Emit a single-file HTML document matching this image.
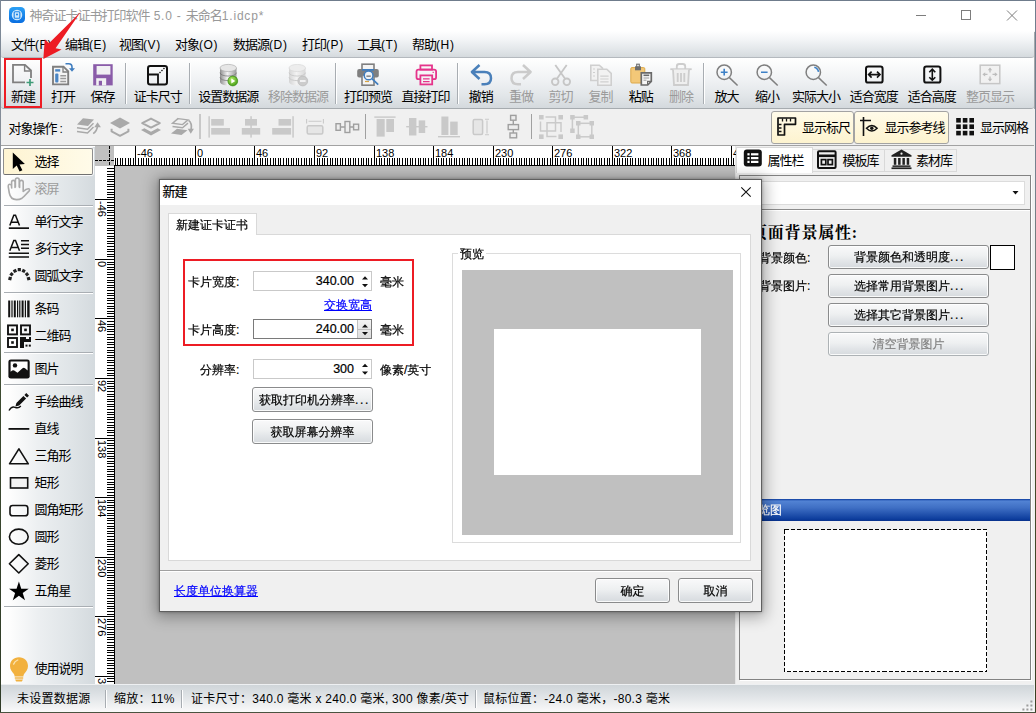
<!DOCTYPE html>
<html lang="zh-CN">
<head>
<meta charset="utf-8">
<title>神奇证卡证书打印软件 5.0</title>
<style>
*{box-sizing:border-box;margin:0;padding:0}
html,body{width:1036px;height:713px;overflow:hidden;background:#f0f0f0}
body{position:relative;font-family:"Liberation Sans","Noto Sans CJK SC",sans-serif;font-size:12px;color:#000}
.abs,.abs *{position:absolute}
svg{overflow:visible}
.ui{font-family:"Liberation Sans","Noto Sans CJK SC",sans-serif;font-size:12px;line-height:16px;white-space:nowrap}
.sim{font-family:"Liberation Sans","WenQuanYi Zen Hei","Noto Sans CJK SC",sans-serif;font-size:12px;line-height:14px;white-space:nowrap;-webkit-text-stroke:.2px currentColor}
/* desktop edges */
#edgeL{left:0;top:0;width:1px;height:713px;background:linear-gradient(#7a8796 0,#8a9099 25%,#858a84 44%,#3f4d33 52%,#2f3b27 100%)}
#edgeR{left:1035px;top:0;width:1px;height:713px;background:linear-gradient(#6f7d8e 0,#76828f 25%,#70766a 44%,#4a4f2c 52%,#3a3f22 100%)}
#edgeR2{left:1034px;top:32px;width:1px;height:77px;background:#a4a8ac}
#edgeB{left:0;top:712px;width:1036px;height:1px;background:#4a5340}
/* title */
#title{left:1px;top:0;width:1035px;height:31px;background:#fff;border-top:1px solid #6f7c8c}
#title .t{left:28.500px;top:6.500px;color:#999}
#title .lt{letter-spacing:.8px;white-space:pre}
/* menu */
#menu{left:1px;top:31px;width:1033px;height:27px;background:linear-gradient(#ffffff 0%,#f2f4f6 35%,#e3e7ea 70%,#d5dade 100%);border-bottom:1px solid #b4b9be;border-radius:0 0 3px 3px}
#menu span{top:5.500px;font-size:13px;letter-spacing:-1px}
/* toolbar */
#tb{left:1px;top:58px;width:1033px;height:51px;background:linear-gradient(#ffffff 0%,#f1f3f5 40%,#e2e6e9 75%,#d4d9dd 100%);border-bottom:1px solid #a6abaf;border-radius:0 0 3px 3px}
.tbi{font-size:13px;letter-spacing:-1px;top:30.500px;transform:translateX(-50%);text-align:center}
.dis{color:#9b9b9b}
.vsep{width:1px;background:#a8adb2;box-shadow:1px 0 0 #fff}
/* obj toolbar */
#ob{left:1px;top:109px;width:1033px;height:37px;background:#f0f0f0;border-bottom:1px solid #a2a2a2}
.tg{height:33px;top:2px;border:1px solid #a3a3a3;border-radius:3px;background:linear-gradient(#fffbe9,#fdf3cf)}
/* left panel */
#lp{left:1px;top:146px;width:94px;height:538px;background:linear-gradient(90deg,#fff 0%,#fdfdfd 10%,#eceff1 40%,#dfe4e7 75%,#d4dade 100%);border-top:1px solid #fff}
.lpi{left:33.500px;font-size:13px;letter-spacing:-1px;margin-top:-1.500px}
.hsep{left:3px;width:89px;height:1px;background:#a9aeb3;box-shadow:0 1px 0 #fff}
/* canvas */
#cv{left:95px;top:146px;width:641px;height:538px;background:#c0c0c0;overflow:hidden}
.rl,.rv{font-family:"Liberation Sans",sans-serif;font-size:11px;line-height:12px;white-space:nowrap}
.rv{transform-origin:0 0;transform:rotate(90deg)}
/* right panel */
#rp{left:736px;top:146px;width:298px;height:538px;background:#f0f0f0}
.btn{border:1px solid #8a8b8c;border-radius:3px;background:linear-gradient(#f9f9fa 0%,#eef0f1 45%,#e2e5e8 70%,#d6dade 100%);text-align:center;box-shadow:inset 0 0 0 1px rgba(255,255,255,.85)}
.btn span{left:0;right:0;text-align:center}
/* status */
#st{left:1px;top:684px;width:1033px;height:28px;background:linear-gradient(#cfd5d9 0%,#dfe3e6 40%,#f1f2f3 80%,#fafafa 100%);border-top:1px solid #eef0f2}
#st span{top:6px;letter-spacing:.27px}
#st i{top:5px;width:1px;height:18px;background:#a8adb2;box-shadow:1px 0 0 #fff}
/* dialog */
#dlg{left:159px;top:179px;width:603px;height:433px;background:#f0f0f0;border:1px solid #5f5f5f;box-shadow:0 2px 14px 3px rgba(0,0,0,.32),0 0 3px rgba(0,0,0,.3)}
.sp{background:#fff;border:1px solid #c9c9c9}
.num{font-family:"Liberation Sans",sans-serif;font-size:12.5px;line-height:14px}
.cj{font-size:13px;letter-spacing:-1px}
.lt{position:static!important;font-weight:normal;font-size:12px;letter-spacing:0}
#menu .lt{letter-spacing:.6px}
.dt{position:static!important;font-weight:normal;letter-spacing:1.700px}
.lnk{color:#0000ff;text-decoration:underline}
</style>
</head>
<body>
<div id="title" class="abs ui">
<svg style="left:8px;top:6px" width="16" height="16" viewBox="0 0 17 17"><defs><linearGradient id="lg0" x1="0" y1="0" x2="0" y2="1"><stop offset="0" stop-color="#2aa0f5"/><stop offset="1" stop-color="#0a6ee0"/></linearGradient></defs><rect x="0" y="0" width="17" height="17" rx="4.5" fill="url(#lg0)"/><circle cx="8.5" cy="8.5" r="5.6" fill="#cfe8fb"/><rect x="5.5" y="5" width="6" height="7" rx="1" fill="none" stroke="#1a84ea" stroke-width="1.2"/><circle cx="8.5" cy="8" r="1.1" fill="#1a84ea"/></svg>
<span class="t cj">神奇证卡证书打印软件<b class="lt"> 5.0 - </b>未命名<b class="lt">1.idcp*</b></span>
<svg style="left:915px;top:9px" width="104" height="12" viewBox="0 0 104 12" fill="none" stroke="#7d7d7d" stroke-width="1"><path d="M0 5.5h10"/><rect x="45.5" y="0.5" width="9" height="9"/><path d="M91 0.5l10 10M101 0.5l-10 10"/></svg>
</div>
<div id="menu" class="abs ui">
<span style="left:10px">文件<b class="lt">(F)</b></span><span style="left:64px">编辑<b class="lt">(E)</b></span><span style="left:118px">视图<b class="lt">(V)</b></span><span style="left:174px">对象<b class="lt">(O)</b></span><span style="left:232px">数据源<b class="lt">(D)</b></span><span style="left:301px">打印<b class="lt">(P)</b></span><span style="left:356px">工具<b class="lt">(T)</b></span><span style="left:411px">帮助<b class="lt">(H)</b></span>
</div>
<div id="tb" class="abs ui">
<svg style="left:0;top:0" width="1033" height="51" viewBox="1 58 1033 51">
<defs>
<linearGradient id="db" x1="0" y1="0" x2="1" y2="0"><stop offset="0" stop-color="#8e8e8e"/><stop offset=".45" stop-color="#f2f2f2"/><stop offset="1" stop-color="#9a9a9a"/></linearGradient>
<linearGradient id="dbd" x1="0" y1="0" x2="1" y2="0"><stop offset="0" stop-color="#d2d2d2"/><stop offset=".45" stop-color="#f3f3f3"/><stop offset="1" stop-color="#d6d6d6"/></linearGradient>
<radialGradient id="gr" cx=".4" cy=".35" r=".7"><stop offset="0" stop-color="#b6ec6a"/><stop offset="1" stop-color="#3f9a12"/></radialGradient>
</defs>
<!-- new -->
<path d="M31 78V70.5L25 64.8H13V82.3H25" fill="none" stroke="#7f7f7f" stroke-width="1.8"/><path d="M24.6 65v6h6" fill="none" stroke="#7f7f7f" stroke-width="1.4"/>
<path d="M30 79v7M26.5 82.5h7" stroke="#3f9b78" stroke-width="1.7" fill="none"/>
<!-- open -->
<path d="M53 66.7h10.5l4.7 4.7v13H53z" fill="#f4f4f4" stroke="#7f7f7f" stroke-width="1.9"/><path d="M63 67v5h5" fill="none" stroke="#7f7f7f" stroke-width="1.3"/>
<rect x="55.2" y="69.2" width="5" height="2.4" fill="#4a86c5"/><rect x="55.2" y="73.6" width="3.2" height="8.8" rx="1" fill="#4a86c5"/>
<path d="M60.3 75.7h5.8M60.3 78.6h5.8M60.3 81.5h5.8" stroke="#9a9a9a" stroke-width="1.5"/>
<path d="M65.5 63.8h3.2q3.3 0 3.3 3.4v2.5" fill="none" stroke="#3f7dbf" stroke-width="1.6"/><path d="M69 68.2h6l-3 3.6z" fill="#3f7dbf"/>
<!-- save -->
<rect x="93.2" y="64.2" width="19.5" height="21.2" fill="#8a5ca9"/><rect x="96.6" y="66" width="13.8" height="8.6" fill="#f1f1f3"/><rect x="96.2" y="78.2" width="10" height="7.2" fill="#f1f1f3"/><rect x="98.8" y="80.8" width="3.2" height="4.6" fill="#8a5ca9"/>
<!-- card size -->
<rect x="148" y="66" width="19" height="18.5" rx="2.2" fill="none" stroke="#111" stroke-width="2"/><path d="M148 74.5h10v10" fill="none" stroke="#111" stroke-width="1.8"/><path d="M159.5 73l5-5" stroke="#111" stroke-width="1.3" stroke-dasharray="1.4 1.4"/>
<!-- set datasource -->
<g><path d="M220 68v13.5c0 5.4 16.5 5.4 16.5 0V68z" fill="url(#db)"/><path d="M220 72.6c0 4.6 16.500 4.600 16.500 0M220 77.200c0 4.600 16.500 4.600 16.500 0" fill="none" stroke="#6f6f6f" stroke-width=".9" opacity=".75"/><ellipse cx="228.250" cy="68" rx="8.250" ry="3.600" fill="#e6e6e6" stroke="#a5a5a5" stroke-width=".6"/>
<circle cx="232.800" cy="81" r="4.900" fill="url(#gr)" stroke="#3a8d12" stroke-width=".7"/><path d="M231.300 78.500v5l4-2.500z" fill="#fff"/></g>
<!-- remove datasource -->
<g opacity=".9"><path d="M289 68v13.500c0 5.400 16.500 5.400 16.500 0V68z" fill="url(#dbd)"/><path d="M289 72.600c0 4.600 16.500 4.600 16.500 0M289 77.200c0 4.600 16.500 4.600 16.500 0" fill="none" stroke="#c4c4c4" stroke-width=".9"/><ellipse cx="297.250" cy="68" rx="8.250" ry="3.600" fill="#ececec" stroke="#d2d2d2" stroke-width=".6"/>
<circle cx="302.800" cy="81" r="4.900" fill="#c9c9c9" stroke="#b5b5b5" stroke-width=".7"/><rect x="300" y="80" width="5.600" height="2" fill="#f2f2f2"/></g>
<!-- print preview -->
<g><rect x="362" y="64.200" width="12" height="6" fill="#f4f4f4" stroke="#7f7f7f" stroke-width="1.600"/><rect x="357.200" y="69" width="21.600" height="8.600" rx="2" fill="#7f7f7f"/><rect x="362" y="69" width="12" height="1.700" fill="#3f7dbf"/><rect x="362" y="75" width="12" height="10.200" fill="#f4f4f4" stroke="#7f7f7f" stroke-width="1.600"/>
<circle cx="368.600" cy="75.400" r="4.400" fill="#eef3f8" stroke="#3f7dbf" stroke-width="1.500"/><path d="M366.400 76.200h4.400" stroke="#8a8a8a" stroke-width="1.600"/><path d="M371.900 78.700l6.300 6" stroke="#3f7dbf" stroke-width="1.700"/><path d="M365 81.500h4" stroke="#d9a441" stroke-width="1.200"/></g>
<!-- print -->
<g fill="none" stroke="#e5348b" stroke-width="1.800"><rect x="420.400" y="65.400" width="11.600" height="4.200"/><rect x="416.500" y="69.600" width="19.600" height="9.600" rx="2"/><rect x="420.400" y="75.400" width="11.800" height="9" fill="#f3f3f5"/><path d="M423 78.800h6.600M423 81.600h6.600" stroke-width="1.300"/><path d="M432.600 72.300h1.200" stroke-width="1.200"/></g>
<!-- undo -->
<path d="M479.500 65l-7.600 7 7.600 7M472.200 72h12.300q6.500 0 6.500 6.200 0 6-6.500 6h-3" fill="none" stroke="#4a80ba" stroke-width="2.500" stroke-linejoin="round"/>
<!-- redo -->
<path d="M523 65l7.600 7-7.600 7M530.300 72H518q-6.500 0-6.500 6.200 0 6 6.500 6h3" fill="none" stroke="#cbcbcb" stroke-width="2.500" stroke-linejoin="round"/>
<!-- cut -->
<g fill="none" stroke="#c6c6c6" stroke-width="1.800"><path d="M555.300 65l9.800 13.800M566.700 65l-9.800 13.800"/><circle cx="555.200" cy="81.800" r="3.300"/><circle cx="566.800" cy="81.800" r="3.300"/></g>
<!-- copy -->
<g fill="#f2f2f2" stroke="#cfcfcf" stroke-width="1.600"><path d="M590.800 65.200h8.500l3.200 3v12.300h-11.700z"/><path d="M597.800 69.200h9l4.400 4.200v11.800h-13.400z"/><path d="M600.300 76.200h8.300M600.300 79h8.300M600.300 81.800h8.300M593 69h2M593 72.500h2M593 76h2" stroke-width="1.200"/></g>
<!-- paste -->
<g><rect x="630.800" y="67.600" width="14" height="15.400" rx="1.200" fill="#f3c878" stroke="#dca94a" stroke-width="1"/><rect x="635" y="66.300" width="6" height="4" fill="#6d6d6d"/><rect x="636.700" y="64.200" width="2.600" height="3" fill="none" stroke="#6d6d6d" stroke-width="1.100"/>
<path d="M641.300 72.800h10v8.600l-3.600 3.600h-6.400z" fill="#f7f7f7" stroke="#6a6a6a" stroke-width="1.700"/><path d="M643.500 75.300h5.700" stroke="#6a6a6a" stroke-width="1.600"/><path d="M643.500 78h5.700M643.500 80.200h3" stroke="#9a9a9a" stroke-width="1"/><path d="M651 81.400h-3.400v3.400" fill="none" stroke="#6a6a6a" stroke-width="1.200"/></g>
<!-- delete -->
<g fill="none" stroke="#cdcdcd" stroke-width="1.800"><path d="M670.300 69.200h21.400"/><path d="M676.800 69v-2.600q0-2.400 2.400-2.400h3.600q2.400 0 2.400 2.400V69"/><path d="M673 69.500l1 15.500h14l1-15.500" fill="#efefef"/><path d="M677.700 73v9M681 73v9M684.300 73v9" stroke-width="1.900"/></g>
<!-- zoom in / out / actual -->
<g fill="none" stroke="#7f7f7f" stroke-width="1.500"><circle cx="724.200" cy="72.200" r="7.200"/><path d="M729.400 77.600l8.200 7.900"/><circle cx="764.300" cy="72.200" r="7.200"/><path d="M769.500 77.600l8.200 7.900"/><circle cx="813.300" cy="72.200" r="7.200"/><path d="M818.500 77.600l8.200 7.900"/></g>
<path d="M724.200 68.800v6.800M720.800 72.200h6.800M761 72.200h6.600" stroke="#3c80c6" stroke-width="1.600" fill="none"/><path d="M814.300 67.200q3.700 1 4.200 4.600" stroke="#3c80c6" stroke-width="1.600" fill="none"/>
<!-- fit width -->
<rect x="866" y="66.600" width="16.600" height="16" rx="2.200" fill="none" stroke="#111" stroke-width="2"/><path d="M869 74.600h10.600M871.600 71.600l-3 3 3 3M877 71.600l3 3-3 3" fill="none" stroke="#111" stroke-width="1.600"/>
<!-- fit height -->
<rect x="924.200" y="66.600" width="16.200" height="16" rx="2.200" fill="none" stroke="#111" stroke-width="2"/><path d="M932.300 69.600v10.200M929.300 72.200l3-3 3 3M929.300 77.200l3 3 3-3" fill="none" stroke="#111" stroke-width="1.600"/>
<!-- whole page -->
<rect x="980.200" y="65.200" width="19.600" height="18.400" fill="#f1f1f1" stroke="#c6c6c6" stroke-width="1.500"/><g stroke="#bdbdbd" stroke-width="1.300" fill="#bdbdbd"><path d="M990 68.500v4M990 76.500v4M983.500 74.400h4M992.500 74.400h4" fill="none"/><path d="M987.800 70.200l2.200-2.800 2.200 2.800zM987.800 78.800l2.200 2.800 2.200-2.800zM985.200 72.200l-2.800 2.200 2.800 2.200zM994.800 72.200l2.800 2.200-2.800 2.200z" stroke="none"/></g>
</svg>
<i class="vsep" style="left:124px;top:5px;height:41px"></i><i class="vsep" style="left:188px;top:5px;height:41px"></i><i class="vsep" style="left:334px;top:5px;height:41px"></i><i class="vsep" style="left:456px;top:5px;height:41px"></i><i class="vsep" style="left:702px;top:5px;height:41px"></i>
<span class="tbi" style="left:22px">新建</span><span class="tbi" style="left:62px">打开</span><span class="tbi" style="left:101.500px">保存</span><span class="tbi" style="left:156.700px">证卡尺寸</span><span class="tbi" style="left:227.300px">设置数据源</span><span class="tbi dis" style="left:297px">移除数据源</span><span class="tbi" style="left:367px">打印预览</span><span class="tbi" style="left:424.600px">直接打印</span><span class="tbi" style="left:479.800px">撤销</span><span class="tbi dis" style="left:520px">重做</span><span class="tbi dis" style="left:559.600px">剪切</span><span class="tbi dis" style="left:599.500px">复制</span><span class="tbi" style="left:639.800px">粘贴</span><span class="tbi dis" style="left:680px">删除</span><span class="tbi" style="left:725.500px">放大</span><span class="tbi" style="left:766px">缩小</span><span class="tbi" style="left:815px">实际大小</span><span class="tbi" style="left:872.800px">适合宽度</span><span class="tbi" style="left:930.800px">适合高度</span><span class="tbi dis" style="left:989px">整页显示</span>
</div>
<div id="ob" class="abs ui">
<span class="cj" style="left:7.500px;top:11.500px">对象操作<b class="lt" style="margin-left:3px">:</b></span>
<div class="tg" style="left:770px;width:83px"></div><div class="tg" style="left:853px;width:95px"></div>
<svg style="left:0;top:0" width="1033" height="37" viewBox="1 109 1033 37">
<g fill="#a9a9a9" stroke="none">
<!-- to front -->
<path d="M83 118.300l11 1.300-6 6.400-11-1.400z"/>
<path d="M77 127.800l10.500 1.400 6-6M77 131.600l10.500 1.400 6-6" fill="none" stroke="#a9a9a9" stroke-width="1.500"/>
<path d="M93.200 133.600q4-2.600 4.400-8.600" fill="none" stroke="#a9a9a9" stroke-width="1.700"/><path d="M94.200 127.200l3.400-5 3.300 5z"/>
<!-- forward -->
<path d="M120 117.600l10 5.400-10 5.400-10-5.400z"/><path d="M111.600 128.800v2.600l8.400 4.400 8.400-4.400v-2.600" fill="none" stroke="#a9a9a9" stroke-width="2" stroke-linejoin="round"/>
<!-- backward -->
<path d="M151 118.600l8.800 4.500-8.800 4.500-8.800-4.500z" fill="none" stroke="#a9a9a9" stroke-width="2" stroke-linejoin="round"/><path d="M144.400 128.200l-3.400 1.800 10 5.400 10-5.400-3.400-1.800-6.600 3.500z"/>
<!-- to back -->
<path d="M178 118.600l10 1.300-5.500 4.700-10-1.300zM172.500 126.500l10 1.300 5.500-4.700" fill="none" stroke="#a9a9a9" stroke-width="1.400"/>
<path d="M177 128.800l10.500 1.400-6 4.800-10.500-1.400z"/>
<path d="M188.600 120.400q3.600 2.600 2.600 9" fill="none" stroke="#a9a9a9" stroke-width="1.700"/><path d="M187.700 128.800l3.100 5 3.100-5z"/>
</g>
<path d="M200 114v25M365.500 114v25M531.500 114v25" stroke="#a0a0a0" stroke-width="1"/>
<g fill="#c9c9c9" stroke="none">
<!-- align left -->
<rect x="208.400" y="116.200" width="1.500" height="21.400"/><rect x="211.200" y="119" width="12.600" height="6.600"/><rect x="211.200" y="128" width="18.800" height="6.600"/>
<!-- align center -->
<rect x="250.300" y="116.200" width="1.500" height="21.400"/><rect x="245" y="119" width="12" height="6.600"/><rect x="241.800" y="128" width="18.400" height="6.600"/>
<!-- align right -->
<rect x="292.300" y="116.200" width="1.500" height="21.400"/><rect x="278.500" y="119" width="12.600" height="6.600"/><rect x="272.200" y="128" width="18.900" height="6.600"/>
<!-- same width -->
<rect x="307.200" y="125.800" width="15.600" height="8.200" rx="1.500" fill="#e6e6e6" stroke="#c9c9c9" stroke-width="1.500"/>
<path d="M306.600 119v4.400M323.400 119v4.400M308.500 121.200h13" fill="none" stroke="#c9c9c9" stroke-width="1.100"/>
<!-- align top -->
<rect x="374.300" y="116.400" width="21.300" height="1.400"/><rect x="376.600" y="119" width="8.100" height="17.600"/><rect x="386.300" y="119" width="7.700" height="13"/>
<!-- v center -->
<rect x="406.200" y="126" width="21.300" height="1.400"/><rect x="409" y="118" width="7.400" height="17.500"/><rect x="418.700" y="120.400" width="6.500" height="12.600"/>
<!-- align bottom -->
<rect x="438" y="136" width="22" height="1.400"/><rect x="441.400" y="116.500" width="7" height="18.500"/><rect x="450.200" y="121.600" width="7.500" height="13.400"/>
<!-- same height -->
<rect x="473.200" y="119.400" width="9.400" height="15.200" rx="1.500" fill="#e6e6e6" stroke="#c9c9c9" stroke-width="1.500"/>
<path d="M485 119.200h4M485 134.800h4M487 120.500v13" fill="none" stroke="#c9c9c9" stroke-width="1.100"/>
<!-- group -->
<g fill="none" stroke="#cacaca" stroke-width="1.500"><path d="M545.500 117h10v14h-15v-9.500"/><path d="M556.500 136.500h-9.500v-13.700h14v9.200"/></g>
<rect x="539" y="115" width="4.600" height="4.500"/><rect x="558.400" y="115" width="4.600" height="4.500"/><rect x="539" y="134.400" width="4.600" height="4.600"/><rect x="558.400" y="134.400" width="4.600" height="4.600"/>
<!-- ungroup -->
<g fill="none" stroke="#cacaca" stroke-width="1.500"><path d="M572.400 130v-12.800h13.600"/><rect x="578.300" y="123.300" width="13.500" height="13.500"/></g>
<rect x="570.200" y="115" width="4.500" height="4.500"/><rect x="583.600" y="115" width="4.500" height="4.500"/><rect x="570.200" y="128.500" width="4.500" height="4.500"/><rect x="576" y="121" width="4.500" height="4.500"/><rect x="589.500" y="121" width="4.500" height="4.500"/><rect x="576" y="134.500" width="4.500" height="4.500"/><rect x="589.500" y="134.500" width="4.500" height="4.500"/>
</g>
<!-- distribute h / v (darker) -->
<g fill="#ededed" stroke="#9f9f9f" stroke-width="1.400"><path d="M340 127h5M350 127h4" fill="none"/><rect x="336" y="123.700" width="4.400" height="6.600"/><rect x="345" y="121.500" width="4.800" height="11"/><rect x="353.600" y="124.200" width="5" height="5.600"/>
<path d="M513.300 120v5M513.300 129.500v4" fill="none"/><rect x="510.600" y="115.400" width="5.400" height="4.800"/><rect x="508.200" y="124.600" width="10.300" height="5"/><rect x="510" y="133" width="6.600" height="4.800"/></g>
<!-- ruler icon -->
<path d="M778 118h17.500v6.300h-11v10.700h-6.500z" fill="none" stroke="#111" stroke-width="1.700" stroke-linejoin="round"/><path d="M782.500 118.500v3M786.500 118.500v3M790.500 118.500v3M778.500 124.500h3M778.500 128h3M778.500 131.500h3" stroke="#111" stroke-width="1.300"/>
<!-- guides icon -->
<path d="M860 120.500h11M863.500 117v19" stroke="#111" stroke-width="1.600"/><path d="M866.500 128.300q5.300-5.600 10.600 0-5.300 5.600-10.600 0z" fill="none" stroke="#111" stroke-width="1.500"/><circle cx="871.800" cy="128.300" r="1.700" fill="#111"/>
<!-- grid icon -->
<g fill="#111"><rect x="956.200" y="118" width="4.600" height="4.600"/><rect x="962.800" y="118" width="4.600" height="4.600"/><rect x="969.400" y="118" width="4.600" height="4.600"/><rect x="956.200" y="124.400" width="4.600" height="4.600"/><rect x="962.800" y="124.400" width="4.600" height="4.600"/><rect x="969.400" y="124.400" width="4.600" height="4.600"/><rect x="956.200" y="130.800" width="4.600" height="4.600"/><rect x="962.800" y="130.800" width="4.600" height="4.600"/><rect x="969.400" y="130.800" width="4.600" height="4.600"/></g>
</svg>
<span class="cj" style="left:801px;top:10.500px">显示标尺</span><span class="cj" style="left:883.500px;top:10.500px">显示参考线</span><span class="cj" style="left:979px;top:10.500px">显示网格</span>
</div>
<div id="lp" class="abs ui">
<div style="left:2px;top:1px;width:90px;height:27px;border:1px solid #8e8e8e;border-bottom-color:#707070;border-radius:2px;background:linear-gradient(90deg,#fef4d2,#fffbe9);box-shadow:0 0 0 1px rgba(255,255,255,.85)"></div>
<svg style="left:0;top:-1px" width="94" height="538" viewBox="1 146 94 538">
<!-- cursor -->
<path d="M12.800 152.600v16.400l3.900-3.400 2.900 6 2.800-1.300-2.900-5.900 5.400-.3z" fill="#000"/>
<!-- hand -->
<path d="M16.500 199.600C12 199.600 10 197 9.300 193L8.300 187C8 185 8.800 184.200 9.800 184.200 10.800 184.200 11.400 185 11.500 186L11.700 188M11.600 187.500V182.200C11.600 181 12.400 180.400 13.300 180.400 14.200 180.400 15 181 15 182.200V187.500M15.400 187V180C15.400 178.600 16.300 178 17.300 178 18.300 178 19.200 178.600 19.200 180V187M19.600 187.500V182.200C19.600 181 20.400 180.400 21.400 180.400 22.400 180.400 23.200 181 23.200 182.200V191.500C25 189.800 27 188.600 28.600 188.800 29.800 189 29.800 190.400 29 191.200 26 194 24.500 196.500 22 198.200 20 199.400 18.500 199.600 16.500 199.600" fill="none" stroke="#aaaaaa" stroke-width="1.600" stroke-linejoin="round" stroke-linecap="round"/>
<!-- A_ -->
<path d="M9.800 225.600l4-10.400h1.700l4 10.400M11.300 222.200h6.700" fill="none" stroke="#111" stroke-width="1.500"/><rect x="8.800" y="227.300" width="20.200" height="1.700" fill="#111"/>
<!-- A lines -->
<path d="M9.800 250.800l4-10.400h1.700l4 10.400M11.300 247.400h6.700" fill="none" stroke="#111" stroke-width="1.500"/><path d="M21 240.800h8M21 244.500h8M21 248.200h8M8.800 253.200h20.200M8.800 257h20.200" stroke="#111" stroke-width="1.500"/>
<!-- arc text -->
<g fill="#222"><rect x="8.500" y="277" width="3.200" height="3.200" transform="rotate(-75 10 278.600)"/><rect x="10" y="272.600" width="3.200" height="3.200" transform="rotate(-50 11.600 274.200)"/><rect x="13.400" y="269.300" width="3.200" height="3.200" transform="rotate(-25 15 271)"/><rect x="17.700" y="268" width="3.200" height="3.200"/><rect x="22" y="269.300" width="3.200" height="3.200" transform="rotate(25 23.600 271)"/><rect x="25.400" y="272.600" width="3.200" height="3.200" transform="rotate(50 27 274.200)"/><rect x="27" y="277" width="3.200" height="3.200" transform="rotate(75 28.600 278.600)"/></g>
<!-- barcode -->
<g fill="#111"><rect x="8.200" y="300.500" width="2" height="16.800"/><rect x="11.400" y="300.500" width="1.200" height="16.800"/><rect x="13.800" y="300.500" width="2" height="16.800"/><rect x="17" y="300.500" width="1.200" height="16.800"/><rect x="19.200" y="300.500" width="1.200" height="16.800"/><rect x="21.600" y="300.500" width="2" height="16.800"/><rect x="24.800" y="300.500" width="1.200" height="16.800"/><rect x="27.200" y="300.500" width="2.400" height="16.800"/></g>
<!-- qr -->
<g fill="none" stroke="#111" stroke-width="1.900"><rect x="8" y="325.400" width="9" height="9"/><rect x="21" y="325.400" width="9" height="9"/><rect x="8" y="338" width="9" height="9"/></g><g fill="#111"><rect x="11.200" y="328.600" width="2.600" height="2.600"/><rect x="24.200" y="328.600" width="2.600" height="2.600"/><rect x="11.200" y="341.200" width="2.600" height="2.600"/><path d="M20 337h6v2h3v-2h2v5h-7v6h-4z"/><rect x="25.500" y="344.600" width="2" height="2"/><rect x="28.800" y="344.600" width="2" height="2"/></g>
<!-- picture -->
<rect x="8.400" y="359.400" width="21.300" height="19.200" rx="2.400" fill="#111"/><path d="M10.600 361.600h17v9l-2.600-2.400q-1.200-1-2.500 0l-5 4.600-3.300-2.200q-1-.6-2 0l-1.600 1.200z" fill="#fff"/><circle cx="15" cy="365.400" r="2.200" fill="#111"/>
<!-- pen -->
<path d="M26.300 393l2.700 2.700-1.900 1.900-2.700-2.700zM23.400 395.900l2.700 2.700-7 7-3.700 1 1-3.700z" fill="#111"/><path d="M9 410.500q2.500-4.500 6-3.200 3.500 1.400 5.800-1.300" fill="none" stroke="#111" stroke-width="1.400"/>
<!-- line -->
<rect x="8.500" y="428" width="20.800" height="1.800" fill="#111"/>
<!-- triangle -->
<path d="M18.900 448.800l9.400 15h-18.800z" fill="none" stroke="#111" stroke-width="1.600" stroke-linejoin="round"/>
<!-- rect -->
<rect x="10.500" y="477.800" width="17.200" height="10.200" fill="#f2f2f2" stroke="#111" stroke-width="1.600"/>
<!-- rounded rect -->
<rect x="10" y="505.500" width="17.800" height="10.300" rx="2.600" fill="none" stroke="#111" stroke-width="1.600"/>
<!-- ellipse -->
<ellipse cx="18.800" cy="536.700" rx="9.400" ry="7.600" fill="none" stroke="#111" stroke-width="1.600"/>
<!-- diamond -->
<path d="M18.800 554.600l9.400 9.200-9.400 9.200-9.400-9.200z" fill="none" stroke="#111" stroke-width="1.600" stroke-linejoin="round"/>
<!-- star -->
<path d="M18.900 581.600l2.350 7.100h7.500l-6.050 4.400 2.300 7.100-6.100-4.400-6.100 4.400 2.300-7.100-6.050-4.400h7.500z" fill="#000"/>
<!-- bulb -->
<path d="M19 657.200c5.400 0 9 3.900 9 8.800 0 3.600-2.200 5.700-3.700 7.800-.7 1-.8 1.700-.9 2.600h-8.800c-.1-.9-.2-1.600-.9-2.600-1.500-2.100-3.700-4.200-3.700-7.800 0-4.900 3.600-8.800 9-8.800z" fill="#f2b13e"/><rect x="14.800" y="677.300" width="8.400" height="1.400" fill="#f2b13e"/><path d="M15 679.400h8l-1.200 2h-5.600z" fill="#f2b13e"/><path d="M13.600 664.200q1-3.200 4.200-4.200" fill="none" stroke="#fbe3b0" stroke-width="1.300" stroke-linecap="round"/>
</svg>
<span class="lpi" style="top:8px">选择</span><span class="lpi dis" style="top:35px;color:#9c9c9c">滚屏</span>
<span class="lpi" style="top:68px">单行文字</span><span class="lpi" style="top:95px">多行文字</span><span class="lpi" style="top:122px">圆弧文字</span>
<span class="lpi" style="top:155px">条码</span><span class="lpi" style="top:182px">二维码</span>
<span class="lpi" style="top:215px">图片</span>
<span class="lpi" style="top:248px">手绘曲线</span><span class="lpi" style="top:275px">直线</span><span class="lpi" style="top:302px">三角形</span><span class="lpi" style="top:329px">矩形</span><span class="lpi" style="top:356px">圆角矩形</span><span class="lpi" style="top:383px">圆形</span><span class="lpi" style="top:410px">菱形</span><span class="lpi" style="top:437px">五角星</span>
<span class="lpi" style="top:515px">使用说明</span>
<i class="hsep" style="top:58px"></i><i class="hsep" style="top:145px"></i><i class="hsep" style="top:205px"></i><i class="hsep" style="top:237px"></i><i class="hsep" style="top:459px"></i>
</div>
<div id="cv" class="abs">
<svg style="left:0;top:0" width="641" height="538" viewBox="95 146 641 538" shape-rendering="crispEdges">
<rect x="114" y="146" width="621" height="20" fill="#fff"/><rect x="95" y="166" width="20" height="518" fill="#fff"/>
<rect x="735" y="146" width="1" height="538" fill="#e6e6e6"/>
<path d="M115.5 158v7M117.5 158v7M120.5 158v7M122.5 158v7M125.5 158v7M128.5 158v7M130.5 158v7M133.5 158v7M135.5 158v7M138.5 158v7M141.5 158v7M143.5 158v7M146.5 158v7M148.5 158v7M151.5 158v7M154.5 158v7M156.5 158v7M159.5 158v7M161.5 158v7M164.5 158v7M166.5 158v7M169.5 158v7M172.5 158v7M174.5 158v7M177.5 158v7M179.5 158v7M182.5 158v7M185.5 158v7M187.5 158v7M190.5 158v7M192.5 158v7M195.5 158v7M198.5 158v7M200.5 158v7M203.5 158v7M205.5 158v7M208.5 158v7M210.5 158v7M213.5 158v7M216.5 158v7M218.5 158v7M221.5 158v7M223.5 158v7M226.5 158v7M229.5 158v7M231.5 158v7M234.5 158v7M236.5 158v7M239.5 158v7M242.5 158v7M244.5 158v7M247.5 158v7M249.5 158v7M252.5 158v7M254.5 158v7M257.5 158v7M260.5 158v7M262.5 158v7M265.5 158v7M267.5 158v7M270.5 158v7M273.5 158v7M275.5 158v7M278.5 158v7M280.5 158v7M283.5 158v7M286.5 158v7M288.5 158v7M291.5 158v7M293.5 158v7M296.5 158v7M298.5 158v7M301.5 158v7M304.5 158v7M306.5 158v7M309.5 158v7M311.5 158v7M314.5 158v7M317.5 158v7M319.5 158v7M322.5 158v7M324.5 158v7M327.5 158v7M330.5 158v7M332.5 158v7M335.5 158v7M337.5 158v7M340.5 158v7M342.5 158v7M345.5 158v7M348.5 158v7M350.5 158v7M353.5 158v7M355.5 158v7M358.5 158v7M361.5 158v7M363.5 158v7M366.5 158v7M368.5 158v7M371.5 158v7M374.5 158v7M376.5 158v7M379.5 158v7M381.5 158v7M384.5 158v7M387.5 158v7M389.5 158v7M392.5 158v7M394.5 158v7M397.5 158v7M399.5 158v7M402.5 158v7M405.5 158v7M407.5 158v7M410.5 158v7M412.5 158v7M415.5 158v7M418.5 158v7M420.5 158v7M423.5 158v7M425.5 158v7M428.5 158v7M431.5 158v7M433.5 158v7M436.5 158v7M438.5 158v7M441.5 158v7M443.5 158v7M446.5 158v7M449.5 158v7M451.5 158v7M454.5 158v7M456.5 158v7M459.5 158v7M462.5 158v7M464.5 158v7M467.5 158v7M469.5 158v7M472.5 158v7M475.5 158v7M477.5 158v7M480.5 158v7M482.5 158v7M485.5 158v7M487.5 158v7M490.5 158v7M493.5 158v7M495.5 158v7M498.5 158v7M500.5 158v7M503.5 158v7M506.5 158v7M508.5 158v7M511.5 158v7M513.5 158v7M516.5 158v7M519.5 158v7M521.5 158v7M524.5 158v7M526.5 158v7M529.5 158v7M531.5 158v7M534.5 158v7M537.5 158v7M539.5 158v7M542.5 158v7M544.5 158v7M547.5 158v7M550.5 158v7M552.5 158v7M555.5 158v7M557.5 158v7M560.5 158v7M563.5 158v7M565.5 158v7M568.5 158v7M570.5 158v7M573.5 158v7M575.5 158v7M578.5 158v7M581.5 158v7M583.5 158v7M586.5 158v7M588.5 158v7M591.5 158v7M594.5 158v7M596.5 158v7M599.5 158v7M601.5 158v7M604.5 158v7M607.5 158v7M609.5 158v7M612.5 158v7M614.5 158v7M617.5 158v7M619.5 158v7M622.5 158v7M625.5 158v7M627.5 158v7M630.5 158v7M632.5 158v7M635.5 158v7M638.5 158v7M640.5 158v7M643.5 158v7M645.5 158v7M648.5 158v7M651.5 158v7M653.5 158v7M656.5 158v7M658.5 158v7M661.5 158v7M663.5 158v7M666.5 158v7M669.5 158v7M671.5 158v7M674.5 158v7M676.5 158v7M679.5 158v7M682.5 158v7M684.5 158v7M687.5 158v7M689.5 158v7M692.5 158v7M695.5 158v7M697.5 158v7M700.5 158v7M702.5 158v7M705.5 158v7M708.5 158v7M710.5 158v7M713.5 158v7M715.5 158v7M718.5 158v7M720.5 158v7M723.5 158v7M726.5 158v7M728.5 158v7M731.5 158v7M733.5 158v7M135.5 146v19M195.5 146v19M254.5 146v19M314.5 146v19M374.5 146v19M433.5 146v19M493.5 146v19M552.5 146v19M612.5 146v19M671.5 146v19M731.5 146v19" stroke="#000" stroke-width="1" fill="none"/>
<rect x="114" y="165" width="621" height="1" fill="#000"/>
<path d="M107 168.5h7M107 171.5h7M107 174.5h7M107 176.5h7M107 179.5h7M107 181.5h7M107 184.5h7M107 186.5h7M107 189.5h7M107 192.5h7M107 194.5h7M107 197.5h7M107 199.5h7M107 202.5h7M107 205.5h7M107 207.5h7M107 210.5h7M107 212.5h7M107 215.5h7M107 218.5h7M107 220.5h7M107 223.5h7M107 225.5h7M107 228.5h7M107 230.5h7M107 233.5h7M107 236.5h7M107 238.5h7M107 241.5h7M107 243.5h7M107 246.5h7M107 249.5h7M107 251.5h7M107 254.5h7M107 256.5h7M107 259.5h7M107 262.5h7M107 264.5h7M107 267.5h7M107 269.5h7M107 272.5h7M107 274.5h7M107 277.5h7M107 280.5h7M107 282.5h7M107 285.5h7M107 287.5h7M107 290.5h7M107 293.5h7M107 295.5h7M107 298.5h7M107 300.5h7M107 303.5h7M107 306.5h7M107 308.5h7M107 311.5h7M107 313.5h7M107 316.5h7M107 318.5h7M107 321.5h7M107 324.5h7M107 326.5h7M107 329.5h7M107 331.5h7M107 334.5h7M107 337.5h7M107 339.5h7M107 342.5h7M107 344.5h7M107 347.5h7M107 350.5h7M107 352.5h7M107 355.5h7M107 357.5h7M107 360.5h7M107 362.5h7M107 365.5h7M107 368.5h7M107 370.5h7M107 373.5h7M107 375.5h7M107 378.5h7M107 381.5h7M107 383.5h7M107 386.5h7M107 388.5h7M107 391.5h7M107 394.5h7M107 396.5h7M107 399.5h7M107 401.5h7M107 404.5h7M107 406.5h7M107 409.5h7M107 412.5h7M107 414.5h7M107 417.5h7M107 419.5h7M107 422.5h7M107 425.5h7M107 427.5h7M107 430.5h7M107 432.5h7M107 435.5h7M107 438.5h7M107 440.5h7M107 443.5h7M107 445.5h7M107 448.5h7M107 451.5h7M107 453.5h7M107 456.5h7M107 458.5h7M107 461.5h7M107 463.5h7M107 466.5h7M107 469.5h7M107 471.5h7M107 474.5h7M107 476.5h7M107 479.5h7M107 482.5h7M107 484.5h7M107 487.5h7M107 489.5h7M107 492.5h7M107 495.5h7M107 497.5h7M107 500.5h7M107 502.5h7M107 505.5h7M107 507.5h7M107 510.5h7M107 513.5h7M107 515.5h7M107 518.5h7M107 520.5h7M107 523.5h7M107 526.5h7M107 528.5h7M107 531.5h7M107 533.5h7M107 536.5h7M107 539.5h7M107 541.5h7M107 544.5h7M107 546.5h7M107 549.5h7M107 551.5h7M107 554.5h7M107 557.5h7M107 559.5h7M107 562.5h7M107 564.5h7M107 567.5h7M107 570.5h7M107 572.5h7M107 575.5h7M107 577.5h7M107 580.5h7M107 583.5h7M107 585.5h7M107 588.5h7M107 590.5h7M107 593.5h7M107 595.5h7M107 598.5h7M107 601.5h7M107 603.5h7M107 606.5h7M107 608.5h7M107 611.5h7M107 614.5h7M107 616.5h7M107 619.5h7M107 621.5h7M107 624.5h7M107 627.5h7M107 629.5h7M107 632.5h7M107 634.5h7M107 637.5h7M107 639.5h7M107 642.5h7M107 645.5h7M107 647.5h7M107 650.5h7M107 652.5h7M107 655.5h7M107 658.5h7M107 660.5h7M107 663.5h7M107 665.5h7M107 668.5h7M107 671.5h7M107 673.5h7M107 676.5h7M107 678.5h7M107 681.5h7M95 199.5h19M95 259.5h19M95 318.5h19M95 378.5h19M95 438.5h19M95 497.5h19M95 557.5h19M95 616.5h19M95 676.5h19" stroke="#000" stroke-width="1" fill="none"/>
<rect x="114" y="165" width="1" height="519" fill="#000"/>
<path d="M109.5 146v20M95 160.500h20" stroke="#000" stroke-width="1" stroke-dasharray="3 1" fill="none"/>
</svg>
<span class="rl" style="left:42px;top:1px">-46</span>
<span class="rl" style="left:102px;top:1px">0</span>
<span class="rl" style="left:161px;top:1px">46</span>
<span class="rl" style="left:221px;top:1px">92</span>
<span class="rl" style="left:281px;top:1px">138</span>
<span class="rl" style="left:340px;top:1px">184</span>
<span class="rl" style="left:400px;top:1px">230</span>
<span class="rl" style="left:459px;top:1px">276</span>
<span class="rl" style="left:519px;top:1px">322</span>
<span class="rl" style="left:578px;top:1px">368</span>
<span class="rl" style="left:638px;top:1px">414</span>
<span class="rv" style="left:13px;top:55px">-46</span>
<span class="rv" style="left:13px;top:115px">0</span>
<span class="rv" style="left:13px;top:174px">46</span>
<span class="rv" style="left:13px;top:234px">92</span>
<span class="rv" style="left:13px;top:294px">138</span>
<span class="rv" style="left:13px;top:353px">184</span>
<span class="rv" style="left:13px;top:413px">230</span>
<span class="rv" style="left:13px;top:472px">276</span>
<span class="rv" style="left:13px;top:532px">322</span>
</div>
<div id="rp" class="abs ui">
<!-- tabs -->
<div style="left:76px;top:3px;width:73px;height:23px;border:1px solid #d9d9d9;border-left:none;background:#f0f0f0"></div>
<div style="left:148px;top:3px;width:73px;height:23px;border:1px solid #d9d9d9;background:#f0f0f0"></div>
<div style="left:0;top:1px;width:77px;height:26px;border:1px solid #d9d9d9;border-bottom:none;background:#fff"></div>
<svg style="left:0;top:0" width="298" height="30" viewBox="736 146 298 30">
<rect x="743.800" y="149.400" width="18" height="17.200" rx="3" fill="#111"/><g fill="#fff"><rect x="747.400" y="153.200" width="2.200" height="2.200"/><rect x="751" y="153.200" width="7.400" height="2.200"/><rect x="747.400" y="157" width="2.200" height="2.200"/><rect x="751" y="157" width="7.400" height="2.200"/><rect x="747.400" y="160.800" width="2.200" height="2.200"/><rect x="751" y="160.800" width="7.400" height="2.200"/></g>
<g fill="none" stroke="#111"><rect x="818" y="151.200" width="17.600" height="16.800" rx="1" stroke-width="2"/><path d="M818 155.800h17.600" stroke-width="2.600"/><rect x="821.400" y="159.600" width="4.400" height="5" stroke-width="1.700"/><rect x="828" y="159.600" width="4.400" height="5" stroke-width="1.700"/></g>
<g fill="#222"><path d="M901.500 149.600l10 5.600v1.500h-20v-1.500z"/><rect x="893.800" y="158" width="2.500" height="6.800"/><rect x="898.100" y="158" width="2.500" height="6.800"/><rect x="902.400" y="158" width="2.500" height="6.800"/><rect x="906.700" y="158" width="2.500" height="6.800"/><rect x="892.500" y="165.400" width="18" height="1.500"/><rect x="891.500" y="167.400" width="20" height="1.700"/></g><circle cx="901.500" cy="153.700" r="1.100" fill="#eee"/>
</svg>
<span class="cj" style="left:31.500px;top:6.500px">属性栏</span><span class="cj" style="left:106.500px;top:6.500px">模板库</span><span class="cj" style="left:180px;top:6.500px">素材库</span>
<!-- frame -->
<div style="left:3px;top:29px;width:292px;height:505px;border:1px solid #828282;box-shadow:1px 1px 0 #fff"></div>
<div style="left:8px;top:35px;width:281px;height:24px;background:#fff;border:1px solid #dcdcdc"></div>
<svg style="left:276px;top:45px" width="7" height="4" viewBox="0 0 7 4"><path d="M.5 0h6L3.500 3.600z" fill="#111"/></svg>
<div style="left:4px;top:63px;width:290px;height:1px;background:#8c8c8c;box-shadow:0 1px 0 #fff"></div>
<span style="left:15px;top:78px;font:bold 16px/18px 'Liberation Serif','Noto Serif CJK SC',serif;letter-spacing:.8px">页面背景属性:</span>
<span class="sim" style="left:23px;top:105px">背景颜色:</span><span class="sim" style="left:23px;top:133px">背景图片:</span>
<div class="btn sim" style="left:92px;top:99px;width:161px;height:24px"><span style="top:4px;padding-left:2px">背景颜色和透明度<b class="dt">...</b></span></div>
<div style="left:254px;top:99px;width:25px;height:25px;background:#fff;border:1px solid #000"></div>
<div class="btn sim" style="left:92px;top:128px;width:161px;height:24px"><span style="top:4px;padding-left:2px">选择常用背景图片<b class="dt">...</b></span></div>
<div class="btn sim" style="left:92px;top:157px;width:161px;height:24px"><span style="top:4px;padding-left:2px">选择其它背景图片<b class="dt">...</b></span></div>
<div class="btn sim" style="left:92px;top:186px;width:161px;height:24px;border-color:#adb2b5"><span style="top:4px;color:#838383">清空背景图片</span></div>
<!-- thumbnail -->
<div style="left:4px;top:353px;width:290px;height:22px;background:linear-gradient(#0a3a9c 0,#5283d4 2px,#3f6fc4 40%,#0c3c9c 92%,#08308a 100%)"></div>
<span class="sim" style="left:10px;top:357px;color:#fff;font-weight:bold">预览图</span>
<svg style="left:48px;top:383px" width="203" height="143" viewBox="0 0 203 143" shape-rendering="crispEdges"><rect x=".5" y=".5" width="202" height="142" fill="#fff" stroke="#000" stroke-width="1" stroke-dasharray="4 2"/></svg>
</div>
<div id="st" class="abs ui">
<span style="left:16px">未设置数据源</span><i style="left:104px"></i><span style="left:113px">缩放：11%</span><i style="left:180px"></i><span style="left:190px">证卡尺寸：340.0 毫米 x 240.0 毫米, 300 像素/英寸</span><i style="left:474px"></i><span style="left:482px">鼠标位置：-24.0 毫米，-80.3 毫米</span>
<svg style="left:1021px;top:15px" width="11" height="11" viewBox="0 0 11 11" fill="#9c9c9c"><rect x="8.400" y="0.500" width="2" height="2"/><rect x="4.400" y="4.500" width="2" height="2"/><rect x="8.400" y="4.500" width="2" height="2"/><rect x="0.400" y="8.500" width="2" height="2"/><rect x="4.400" y="8.500" width="2" height="2"/><rect x="8.400" y="8.500" width="2" height="2"/></svg>
</div>
<div id="dlg" class="abs sim">
<div style="left:0;top:0;width:601px;height:25px;background:#fff"></div>
<span class="ui cj" style="left:2.500px;top:3.500px">新建</span>
<svg style="left:581px;top:7px" width="10" height="10" viewBox="0 0 10 10"><path d="M.3.300l9.400 9.400M9.700.300l-9.400 9.400" stroke="#111" stroke-width="1.100" fill="none"/></svg>
<!-- tab pane -->
<div style="left:8px;top:54px;width:583px;height:327px;background:#fff;border:1px solid #d9d9d9"></div>
<div style="left:8px;top:33px;width:89px;height:22px;background:#fff;border:1px solid #d9d9d9;border-bottom:none"></div>
<span style="left:16px;top:38px">新建证卡证书</span>
<!-- red box -->
<div style="left:23px;top:79px;width:231px;height:87px;border:2px solid #ed1c24"></div>
<span style="left:28px;top:95px">卡片宽度:</span>
<div class="sp" style="left:93px;top:91px;width:119px;height:20px"></div>
<span class="num" style="left:93px;top:94px;width:101px;text-align:right">340.00</span>
<span style="left:220px;top:95px">毫米</span>
<span class="lnk" style="left:164px;top:118px">交换宽高</span>
<span style="left:28px;top:143px">卡片高度:</span>
<div class="sp" style="left:93px;top:139px;width:119px;height:20px;border-color:#7a7a7a"></div>
<div style="left:197px;top:140px;width:14px;height:18px;background:linear-gradient(#f4f4f4,#dcdcdc);border-left:1px solid #c0c0c0"></div>
<div style="left:197px;top:149px;width:14px;height:1px;background:#c0c0c0"></div>
<span class="num" style="left:93px;top:142px;width:101px;text-align:right">240.00</span>
<span style="left:220px;top:143px">毫米</span>
<span style="left:40px;top:183px">分辨率:</span>
<div class="sp" style="left:93px;top:179px;width:119px;height:20px"></div>
<span class="num" style="left:93px;top:182px;width:101px;text-align:right">300</span>
<span style="left:220px;top:183px">像素/英寸</span>
<svg style="left:202px;top:96px" width="6" height="104" viewBox="0 0 6 104" fill="#111"><path d="M0 3.500h6L3 .300zM0 8h6L3 11.200zM0 51.500h6L3 48.300zM0 56h6L3 59.200zM0 91h6L3 87.800zM0 95.500h6L3 98.700z"/></svg>
<div class="btn" style="left:92px;top:207px;width:121px;height:25px"><span style="top:5px;padding-left:4px">获取打印机分辨率<b class="dt">...</b></span></div>
<div class="btn" style="left:92px;top:239px;width:121px;height:25px"><span style="top:5px">获取屏幕分辨率</span></div>
<!-- preview group -->
<div style="left:292px;top:73px;width:289px;height:290px;border:1px solid #dcdcdc"></div>
<span style="left:298px;top:67px;background:#fff;padding:0 2px">预览</span>
<div style="left:302px;top:90px;width:271px;height:265px;background:#c0c0c0"></div>
<div style="left:334px;top:149px;width:207px;height:146px;background:#fff"></div>
<!-- bottom -->
<div style="left:0;top:390px;width:601px;height:1px;background:#a0a0a0;box-shadow:0 1px 0 #fff"></div>
<span class="lnk" style="left:14px;top:404px">长度单位换算器</span>
<div class="btn" style="left:435px;top:398px;width:75px;height:25px"><span style="top:5px">确定</span></div>
<div class="btn" style="left:518px;top:398px;width:75px;height:25px"><span style="top:5px">取消</span></div>
</div>
<!-- annotation arrow -->
<svg class="abs" style="left:0;top:0" width="120" height="80" viewBox="0 0 120 80"><path d="M80.800 11.800L49 43.300 44.800 39.300 43.300 59 61.600 49.400 55.600 48.200z" fill="#ed1c24"/></svg>
<div class="abs" style="left:4px;top:58px;width:38px;height:50px;border:2px solid #ed1c24"></div>
<div id="edgeL" class="abs"></div><div id="edgeR" class="abs"></div><div id="edgeR2" class="abs"></div><div id="edgeB" class="abs"></div>
</body></html>
